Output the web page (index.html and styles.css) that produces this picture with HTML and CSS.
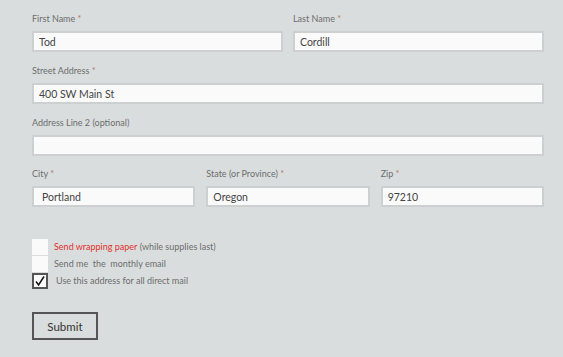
FILE: index.html
```html
<!DOCTYPE html>
<html lang="en">
<head>
	<meta charset="UTF-8">
	<title>Address</title>
	<link rel="stylesheet" href="styles.css">
</head>
<body>
	<form class="addrForm" action="">
		<div class="row two">
			<div class="field">
				<label>First Name <em>*</em></label>
				<input type="text" class="ipt" value="Tod">
			</div>
			<div class="field">
				<label>Last Name <em>*</em></label>
				<input type="text" class="ipt" value="Cordill">
			</div>
		</div>
		<div class="row">
			<div class="field">
				<label>Street Address <em>*</em></label>
				<input type="text" class="ipt" value="400 SW Main St">
			</div>
		</div>
		<div class="row">
			<div class="field">
				<label>Address Line 2 (optional)</label>
				<input type="text" class="ipt" value="">
			</div>
		</div>
		<div class="row three">
			<div class="field">
				<label>City <em>*</em></label>
				<input type="text" class="ipt city" value="Portland">
			</div>
			<div class="field">
				<label>State (or Province) <em>*</em></label>
				<input type="text" class="ipt" value="Oregon">
			</div>
			<div class="field">
				<label>Zip <em>*</em></label>
				<input type="text" class="ipt" value="97210">
			</div>
		</div>

		<ul class="checks">
			<li><span class="box"></span><span class="red">Send wrapping paper</span>&nbsp;(while supplies last)</li>
			<li><span class="box"></span>Send me&nbsp; the&nbsp; monthly email</li>
			<li class="on">
				<span class="box">
					<svg width="12" height="12" viewBox="0 0 12 12"><path d="M2 6.5 L4.6 10 L10 1.5" fill="none" stroke="#111" stroke-width="1.5"/></svg>
				</span>Use this address for all direct mail
			</li>
		</ul>

		<input type="button" value="Submit" class="btnSubmit">
	</form>
</body>
</html>
```

FILE: styles.css
```css
body{
	margin:0;
	background:#dadddd;
	font-family:"Lato","Noto Sans",sans-serif;
}
ul,li{
	margin:0;
	padding:0;
	list-style:none;
}
.addrForm{
	width:512px;
	padding:13px 0 0 32px;
}
.row{
	display:grid;
	grid-template-columns:1fr;
	margin-bottom:13px;
}
.row.two{
	grid-template-columns:1fr 1fr;
	column-gap:10px;
}
.row.three{
	grid-template-columns:1fr 1fr 1fr;
	column-gap:11px;
	margin-top:-1px;
}
.field label{
	display:block;
	height:12px;
	line-height:12px;
	margin-bottom:6px;
	font-size:9px;
	color:#6b6e6e;
}
.field label em{
	font-style:normal;
	color:#b0786a;
}
.ipt{
	display:block;
	box-sizing:border-box;
	width:100%;
	height:21px;
	margin:0;
	padding:0 5px;
	border:2px solid #cdd0d0;
	background:#fafafa;
	outline:none;
	font-family:inherit;
	font-size:10.5px;
	color:#444;
}
.ipt.city{
	padding-left:8px;
}
.checks{
	margin-top:31px;
	font-size:9px;
	color:#6b6e6e;
}
.checks li{
	display:flex;
	align-items:center;
	height:17px;
}
.checks .box{
	display:flex;
	align-items:center;
	justify-content:center;
	box-sizing:border-box;
	width:16px;
	height:16px;
	margin-right:6px;
	background:#fafafa;
}
.checks .on .box{
	border:2px solid #555;
	margin-right:8px;
}
.checks .red{
	color:#e0302c;
}
.btnSubmit{
	display:block;
	box-sizing:border-box;
	width:66px;
	height:28px;
	margin-top:23px;
	border:2px solid #555;
	background:#dadddd;
	font-family:inherit;
	font-size:11.5px;
	color:#333;
	cursor:pointer;
}
```
